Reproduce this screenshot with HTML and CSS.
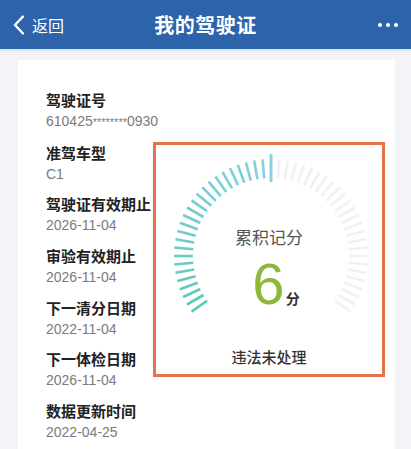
FILE: index.html
```html
<!DOCTYPE html>
<html lang="zh-CN">
<head>
    <meta charset="UTF-8">
    <title>我的驾驶证</title>
    <link rel="stylesheet" href="styles.css">
</head>
<body>
    <header class="topbar">
        <a class="back">
            <svg class="back-icon" width="12" height="20" viewBox="0 0 12 20">
                <polyline points="10,1.5 2,10 10,18.5"></polyline>
            </svg>
            <span>返回</span>
        </a>
        <h1 class="title">我的驾驶证</h1>
        <div class="more">
            <span class="dot"></span><span class="dot"></span><span class="dot"></span>
        </div>
    </header>
    <div class="topbar-line"></div>

    <main class="page">
        <div class="card">
            <div class="info">
                <div class="item">
                    <div class="item-label">驾驶证号</div>
                    <div class="item-value">610425<span class="mask">********</span>0930</div>
                </div>
                <div class="item">
                    <div class="item-label">准驾车型</div>
                    <div class="item-value">C1</div>
                </div>
                <div class="item">
                    <div class="item-label">驾驶证有效期止</div>
                    <div class="item-value">2026-11-04</div>
                </div>
                <div class="item">
                    <div class="item-label">审验有效期止</div>
                    <div class="item-value">2026-11-04</div>
                </div>
                <div class="item">
                    <div class="item-label">下一清分日期</div>
                    <div class="item-value">2022-11-04</div>
                </div>
                <div class="item">
                    <div class="item-label">下一体检日期</div>
                    <div class="item-value">2026-11-04</div>
                </div>
                <div class="item">
                    <div class="item-label">数据更新时间</div>
                    <div class="item-value">2022-04-25</div>
                </div>
            </div>

            <div class="score-box">
                <svg class="gauge" id="gauge" width="226" height="229" viewBox="0 0 226 229"></svg>
                <div class="score-label">累积记分</div>
                <div class="score-value"><span class="score-num">6</span><span class="score-unit">分</span></div>
                <div class="score-status">违法未处理</div>
            </div>
        </div>
    </main>

    <script>
        // Gauge ticks: filled from the left end up to the pointer at the top
        const gauge = document.getElementById('gauge');
        const cx = 115;
        const cy = 111;
        const from = [94, 200, 184];
        const to = [134, 210, 226];

        for (let a = -125; a <= 125; a += 5) {
            const rad = a * Math.PI / 180;
            const pointer = a === 0;
            const r1 = pointer ? 74 : 78;
            const r2 = pointer ? 102 : 97;
            let color = '#f0f1f3';
            if (a <= 0) {
                const t = (a + 125) / 125;
                const c = from.map((v, i) => Math.round(v + (to[i] - v) * t));
                color = `rgb(${c[0]},${c[1]},${c[2]})`;
            }
            const line = document.createElementNS('http://www.w3.org/2000/svg', 'line');
            line.setAttribute('x1', (cx + r1 * Math.sin(rad)).toFixed(2));
            line.setAttribute('y1', (cy - r1 * Math.cos(rad)).toFixed(2));
            line.setAttribute('x2', (cx + r2 * Math.sin(rad)).toFixed(2));
            line.setAttribute('y2', (cy - r2 * Math.cos(rad)).toFixed(2));
            line.setAttribute('stroke', color);
            line.setAttribute('stroke-width', pointer ? '3' : '2.6');
            gauge.appendChild(line);
        }
    </script>
</body>
</html>
```

FILE: styles.css
```css
body {
    margin: 0;
    background-color: #f3f3f8;
    font-family: "Liberation Sans", "Noto Sans CJK SC", sans-serif;
    color: #222;
    overflow: hidden;
}

.topbar {
    height: 49px;
    background-color: #2c63ab;
    color: white;
    display: grid;
    grid-template-columns: 1fr auto 1fr;
    align-items: center;
    padding: 0 13px 0 13px;
}

.back {
    display: flex;
    align-items: center;
    gap: 7px;
    font-size: 16px;
}

.back-icon polyline {
    fill: none;
    stroke: white;
    stroke-width: 2.4;
    stroke-linecap: round;
    stroke-linejoin: round;
}

.title {
    margin: 0;
    font-size: 20px;
    font-weight: bold;
    letter-spacing: 0.5px;
}

.more {
    display: flex;
    justify-content: flex-end;
    gap: 4px;
}

.dot {
    width: 4px;
    height: 4px;
    border-radius: 50%;
    background-color: white;
}

.topbar-line {
    height: 2px;
    background-color: #dbe6f3;
}

.page {
    padding: 9px 16px 0 18px;
}

.card {
    background-color: white;
    display: flex;
    padding: 30px 10px 0 28px;
}

.info {
    width: 107px;
    flex-shrink: 0;
}

.item {
    margin-bottom: 10.7px;
    white-space: nowrap;
}

.item-label {
    font-size: 15px;
    line-height: 21px;
    font-weight: bold;
    color: #222;
}

.item-value {
    font-size: 14px;
    line-height: 20px;
    color: #7b7b7b;
}

.mask {
    font-size: 11px;
}

.score-box {
    position: relative;
    box-sizing: border-box;
    width: 232px;
    height: 235px;
    margin-top: 52px;
    border: 3px solid #e5724e;
    text-align: center;
    padding-top: 82px;
}

.gauge {
    position: absolute;
    top: 0;
    left: 0;
}

.score-label {
    position: relative;
    font-size: 17px;
    line-height: 24px;
    color: #555;
}

.score-value {
    position: relative;
    margin-top: 4px;
    padding-left: 14px;
    line-height: 58px;
}

.score-num {
    font-size: 58px;
    color: #8db83a;
}

.score-unit {
    font-size: 14px;
    font-weight: bold;
    color: #333;
    margin-left: 1px;
}

.score-status {
    position: relative;
    margin-top: 19px;
    font-size: 15px;
    line-height: 22px;
    font-weight: 500;
    color: #333;
}
```
